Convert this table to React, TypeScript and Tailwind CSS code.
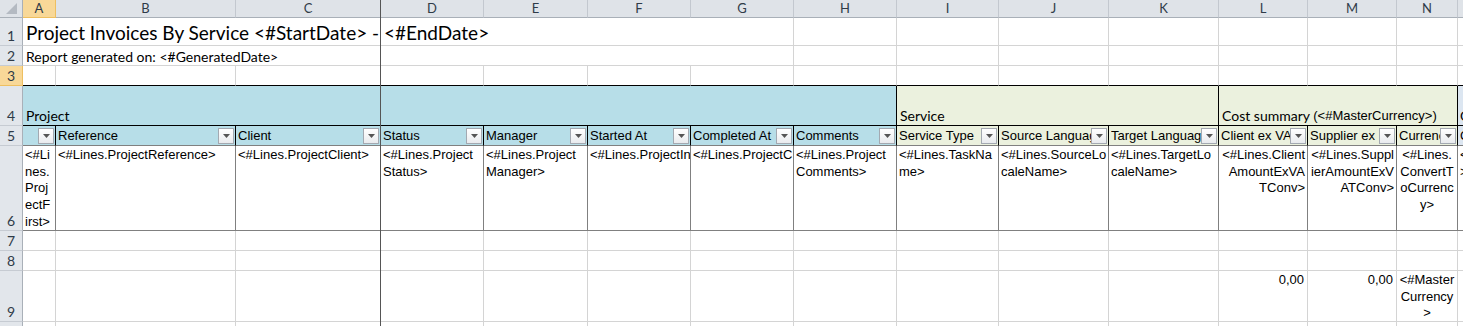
import React from 'react';

// Excel-like sheet: fixed column widths / row heights taken from the screenshot
const ARIAL = "font-['Liberation_Sans',Arial,sans-serif]";
const CALIBRI = "font-['Lato',sans-serif]";

type CellProps = {
  span?: string;
  r?: string;
  b?: string;
  bg?: string;
  className?: string;
  children?: React.ReactNode;
};

const Cell = ({
  span = '',
  r = 'border-r-[#d4d4d4]',
  b = 'border-b-[#d4d4d4]',
  bg = 'bg-white',
  className = '',
  children,
}: CellProps) => (
  <div className={`${span} border-r border-b ${r} ${b} ${bg} overflow-hidden min-w-0 ${className}`}>{children}</div>
);

const ColHead = ({ label, active = false }: { label: string; active?: boolean }) => (
  <div
    className={`flex items-center justify-center border-r border-b text-[13px] ${CALIBRI} text-[#2f3b48] ${
      active
        ? 'bg-[#f8d898] border-r-[#eebf60] border-b-[#eebf60]'
        : 'bg-[#dfe3e8] border-r-[#c3c8cf] border-b-[#a9b0b8]'
    }`}
  >
    {label}
  </div>
);

const RowHead = ({ n, active = false }: { n: number; active?: boolean }) => (
  <div
    className={`flex items-end justify-center border-r border-b text-[14px] leading-[18px] ${CALIBRI} text-[#2f3b48] ${
      active
        ? 'bg-[#f8d898] border-r-[#eebf60] border-b-[#eebf60]'
        : 'bg-[#e2e6eb] border-r-[#a9b0b8] border-b-[#c6cbd2]'
    }`}
  >
    {n}
  </div>
);

const Filter = () => (
  <span className="shrink-0 mr-[1px] w-[16px] h-[16px] border border-[#a3a9b1] bg-gradient-to-b from-white to-[#e9ebee] flex items-center justify-center">
    <svg width="7" height="4" viewBox="0 0 7 4">
      <polygon points="0,0 7,0 3.5,4" fill="#555" />
    </svg>
  </span>
);

const BLUE = 'bg-[#b7dee8]';
const GREEN = 'bg-[#ebf1de]';

const HeadCell = ({ label = '', bg }: { label?: string; bg: string }) => (
  <Cell bg={bg} r="border-r-black" b="border-b-[#808080]" className={`flex items-center pl-[2px] text-[13px] ${ARIAL} text-black`}>
    <span className="flex-1 min-w-0 overflow-hidden whitespace-nowrap leading-[16px]">{label}</span>
    <Filter />
  </Cell>
);

const WrapCell = ({ lines, align = 'text-left' }: { lines: string[]; align?: string }) => (
  <Cell
    r="border-r-[#808080]"
    b="border-b-[#808080]"
    className={`pt-[1px] px-[2px] text-[13px] leading-[16.7px] whitespace-nowrap text-black ${ARIAL} ${align}`}
  >
    {lines.map((l, i) => (
      <div key={i}>{l}</div>
    ))}
  </Cell>
);

const letters = ['A', 'B', 'C', 'D', 'E', 'F', 'G', 'H', 'I', 'J', 'K', 'L', 'M', 'N', 'O'];
const blanks = (n: number, b?: string) => Array.from({ length: n }, (_, i) => <Cell key={i} b={b} />);

const App = () => {
  return (
    <div className="w-[1463px] h-[326px] overflow-hidden bg-white">
      <div className="relative grid w-max grid-cols-[23px_33px_180px_145px_103px_104px_103px_103px_103px_102px_110px_110px_89px_89px_61px_100px] grid-rows-[18px_28px_20px_20px_40px_20px_85px_20px_20px_51px_20px]">
        {/* column headers */}
        <div className="relative bg-[#dfe3e8] border-r border-b border-r-[#a9b0b8] border-b-[#a9b0b8] flex items-end justify-end pr-[5px] pb-[3px]">
          <svg width="11" height="11" viewBox="0 0 11 11">
            <polygon points="11,0 11,11 0,11" fill="#b4bac2" />
          </svg>
        </div>
        {letters.map((l) => (
          <ColHead key={l} label={l} active={l === 'A'} />
        ))}

        {/* row 1 */}
        <RowHead n={1} />
        <Cell span="col-span-7" className={`flex items-end pl-[3px] pb-[1px] text-[19px] leading-[22px] whitespace-nowrap text-black ${CALIBRI}`}>
          Project Invoices By Service &lt;#StartDate&gt; - &lt;#EndDate&gt;
        </Cell>
        {blanks(8)}

        {/* row 2 */}
        <RowHead n={2} />
        <Cell span="col-span-7" className={`flex items-end pl-[3px] text-[14px] leading-[17px] whitespace-nowrap text-black ${CALIBRI}`}>
          Report generated on: &lt;#GeneratedDate&gt;
        </Cell>
        {blanks(8)}

        {/* row 3 */}
        <RowHead n={3} active />
        {blanks(15, 'border-b-black')}

        {/* row 4 group headers */}
        <RowHead n={4} />
        <Cell span="col-span-8" bg={BLUE} r="border-r-black" b="border-b-black" className={`flex items-end pl-[3px] pb-[1px] text-[14px] leading-[16px] text-black ${CALIBRI}`}>
          Project
        </Cell>
        <Cell span="col-span-3" bg={GREEN} r="border-r-black" b="border-b-black" className={`flex items-end pl-[3px] pb-[1px] text-[14px] leading-[16px] text-black ${CALIBRI}`}>
          Service
        </Cell>
        <Cell span="col-span-3" bg={GREEN} r="border-r-black" b="border-b-black" className="flex items-end pl-[3px] pb-[1px] leading-[16px] whitespace-nowrap text-black">
          <span className={`text-[14px] ${CALIBRI}`}>Cost summary&nbsp;</span>
          <span className={`text-[13px] ${ARIAL}`}>(&lt;#MasterCurrency&gt;)</span>
        </Cell>
        <Cell bg="bg-[#dce6f1]" b="border-b-black" className={`flex items-end pl-[2px] pb-[1px] text-[14px] leading-[16px] whitespace-nowrap text-black ${CALIBRI}`}>
          C
        </Cell>

        {/* row 5 column headers */}
        <RowHead n={5} />
        <HeadCell bg={BLUE} />
        <HeadCell bg={BLUE} label="Reference" />
        <HeadCell bg={BLUE} label="Client" />
        <HeadCell bg={BLUE} label="Status" />
        <HeadCell bg={BLUE} label="Manager" />
        <HeadCell bg={BLUE} label="Started At" />
        <HeadCell bg={BLUE} label="Completed At" />
        <HeadCell bg={BLUE} label="Comments" />
        <HeadCell bg={GREEN} label="Service Type" />
        <HeadCell bg={GREEN} label="Source Languag" />
        <HeadCell bg={GREEN} label="Target Languag" />
        <HeadCell bg={GREEN} label="Client ex VA" />
        <HeadCell bg={GREEN} label="Supplier ex" />
        <HeadCell bg={GREEN} label="Currenc" />
        <HeadCell bg="bg-[#dce6f1]" label="C" />

        {/* row 6 template line */}
        <RowHead n={6} />
        <WrapCell lines={['<#Li', 'nes.', 'Proj', 'ectF', 'irst>']} />
        <WrapCell lines={['<#Lines.ProjectReference>']} />
        <WrapCell lines={['<#Lines.ProjectClient>']} />
        <WrapCell lines={['<#Lines.Project', 'Status>']} />
        <WrapCell lines={['<#Lines.Project', 'Manager>']} />
        <WrapCell lines={['<#Lines.ProjectIn']} />
        <WrapCell lines={['<#Lines.ProjectC']} />
        <WrapCell lines={['<#Lines.Project', 'Comments>']} />
        <WrapCell lines={['<#Lines.TaskNa', 'me>']} />
        <WrapCell lines={['<#Lines.SourceLo', 'caleName>']} />
        <WrapCell lines={['<#Lines.TargetLo', 'caleName>']} />
        <WrapCell lines={['<#Lines.Client', 'AmountExVA', 'TConv>']} align="text-right" />
        <WrapCell lines={['<#Lines.Suppl', 'ierAmountExV', 'ATConv>']} align="text-right" />
        <WrapCell lines={['<#Lines.', 'ConvertT', 'oCurrenc', 'y>']} align="text-center" />
        <WrapCell lines={['<', '>']} />

        {/* row 7 */}
        <RowHead n={7} />
        {blanks(15)}

        {/* row 8 */}
        <RowHead n={8} />
        {blanks(15)}

        {/* row 9 totals */}
        <RowHead n={9} />
        {blanks(11)}
        <Cell className={`pt-[1px] pr-[3px] text-right text-[13px] leading-[16.7px] text-black ${ARIAL}`}>0,00</Cell>
        <Cell className={`pt-[1px] pr-[3px] text-right text-[13px] leading-[16.7px] text-black ${ARIAL}`}>0,00</Cell>
        <Cell className={`pt-[1px] text-center text-[13px] leading-[16.7px] whitespace-nowrap text-black ${ARIAL}`}>
          <div>&lt;#Master</div>
          <div>Currency</div>
          <div>&gt;</div>
        </Cell>
        <Cell />

        {/* row 10 */}
        <RowHead n={10} />
        {blanks(15)}

        {/* frozen pane divider */}
        <div className="absolute left-[380px] top-0 bottom-0 w-px bg-[#555]" />
      </div>
    </div>
  );
};

export default App;
